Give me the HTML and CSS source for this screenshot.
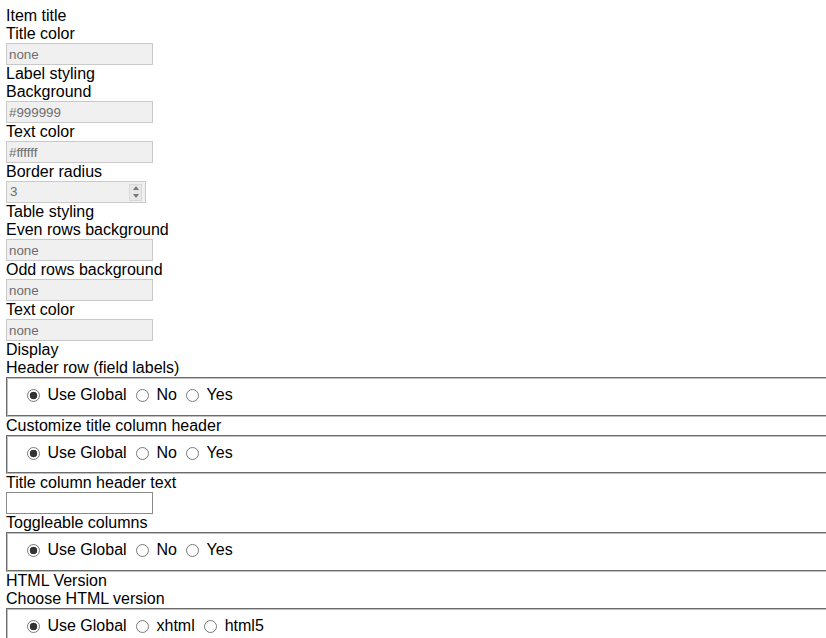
FILE: index.html
```html
<!DOCTYPE html>
<html>
<head>
<meta charset="utf-8">
<link rel="stylesheet" href="styles.css">
</head>
<body>
<div class="page">
  <div class="label">Item title</div>
  <div class="label">Title color</div>
  <input class="field" type="text" readonly value="none">
  <div class="label">Label styling</div>
  <div class="label">Background</div>
  <input class="field" type="text" readonly value="#999999">
  <div class="label">Text color</div>
  <input class="field" type="text" readonly value="#ffffff">
  <div class="label">Border radius</div>
  <div class="numfield"><span class="numval">3</span><span class="spin"><span class="up"></span><span class="down"></span></span></div>
  <div class="label">Table styling</div>
  <div class="label">Even rows background</div>
  <input class="field" type="text" readonly value="none">
  <div class="label">Odd rows background</div>
  <input class="field" type="text" readonly value="none">
  <div class="label">Text color</div>
  <input class="field" type="text" readonly value="none">
  <div class="label">Display</div>
  <div class="label">Header row (field labels)</div>
  <fieldset class="choice"><div class="opts"><input class="radio" type="radio" name="a" checked> <label>Use Global</label> <input class="radio" type="radio" name="a"> <label>No</label> <input class="radio" type="radio" name="a"> <label>Yes</label></div></fieldset>
  <div class="label">Customize title column header</div>
  <fieldset class="choice"><div class="opts"><input class="radio" type="radio" name="b" checked> <label>Use Global</label> <input class="radio" type="radio" name="b"> <label>No</label> <input class="radio" type="radio" name="b"> <label>Yes</label></div></fieldset>
  <div class="label">Title column header text</div>
  <input class="field plain" type="text" value="">
  <div class="label">Toggleable columns</div>
  <fieldset class="choice"><div class="opts"><input class="radio" type="radio" name="c" checked> <label>Use Global</label> <input class="radio" type="radio" name="c"> <label>No</label> <input class="radio" type="radio" name="c"> <label>Yes</label></div></fieldset>
  <div class="label">HTML Version</div>
  <div class="label">Choose HTML version</div>
  <fieldset class="choice"><div class="opts"><input class="radio" type="radio" name="d" checked> <label>Use Global</label> <input class="radio" type="radio" name="d"> <label>xhtml</label> <input class="radio" type="radio" name="d"> <label>html5</label></div></fieldset>
</div>
</body>
</html>
```

FILE: styles.css
```css
html, body {
  margin: 0;
  padding: 0;
  background: #ffffff;
  overflow: hidden;
}

.page {
  padding: 7px 0 0 6px;
  font-family: "Liberation Sans", Arial, sans-serif;
  font-size: 16px;
  line-height: 18px;
  color: #000000;
  overflow: hidden;
}

.label {
  height: 18px;
  white-space: nowrap;
}

.field {
  display: block;
  box-sizing: border-box;
  width: 147px;
  height: 22px;
  margin: 0;
  padding: 1px 2px;
  border: 1px solid #c9c9c9;
  background: #f0f0f0;
  color: #6d6d6d;
  font-family: "Liberation Sans", Arial, sans-serif;
  font-size: 13.33px;
  outline: none;
}

.field.plain {
  background: #ffffff;
  border-color: #8a8a8a;
  color: #000000;
}

.numfield {
  box-sizing: border-box;
  width: 140px;
  height: 22px;
  border: 1px solid #c9c9c9;
  background: #f0f0f0;
  color: #6d6d6d;
  font-size: 13.33px;
  line-height: 18px;
  padding: 1px 2px 1px 3px;
  display: flex;
  justify-content: space-between;
  align-items: center;
}

.spin {
  width: 13px;
  height: 17px;
  background: #e8e8e8;
  border: 1px solid #d8d8d8;
  display: flex;
  flex-direction: column;
  align-items: center;
  justify-content: space-around;
  box-sizing: border-box;
  margin-right: 1px;
}

.up {
  width: 0;
  height: 0;
  border-left: 3.5px solid transparent;
  border-right: 3.5px solid transparent;
  border-bottom: 4px solid #777777;
}

.down {
  width: 0;
  height: 0;
  border-left: 3.5px solid transparent;
  border-right: 3.5px solid transparent;
  border-top: 4px solid #777777;
}

.choice {
  box-sizing: border-box;
  width: 860px;
  height: 39.5px;
  margin: 0;
  padding: 7px 14px 10.5px;
  border: 2px groove #c0c0c0;
  min-width: 0;
}

.opts {
  height: 18px;
  white-space: nowrap;
}

.radio {
  -webkit-appearance: none;
  appearance: none;
  box-sizing: border-box;
  width: 13px;
  height: 13px;
  margin: 0 3px 0 5px;
  border: 1px solid #7a7a7a;
  border-radius: 50%;
  background: #ffffff;
  vertical-align: -2px;
}

.radio:checked {
  background: radial-gradient(circle, #333333 0 3.5px, #ffffff 4.1px);
}
```
